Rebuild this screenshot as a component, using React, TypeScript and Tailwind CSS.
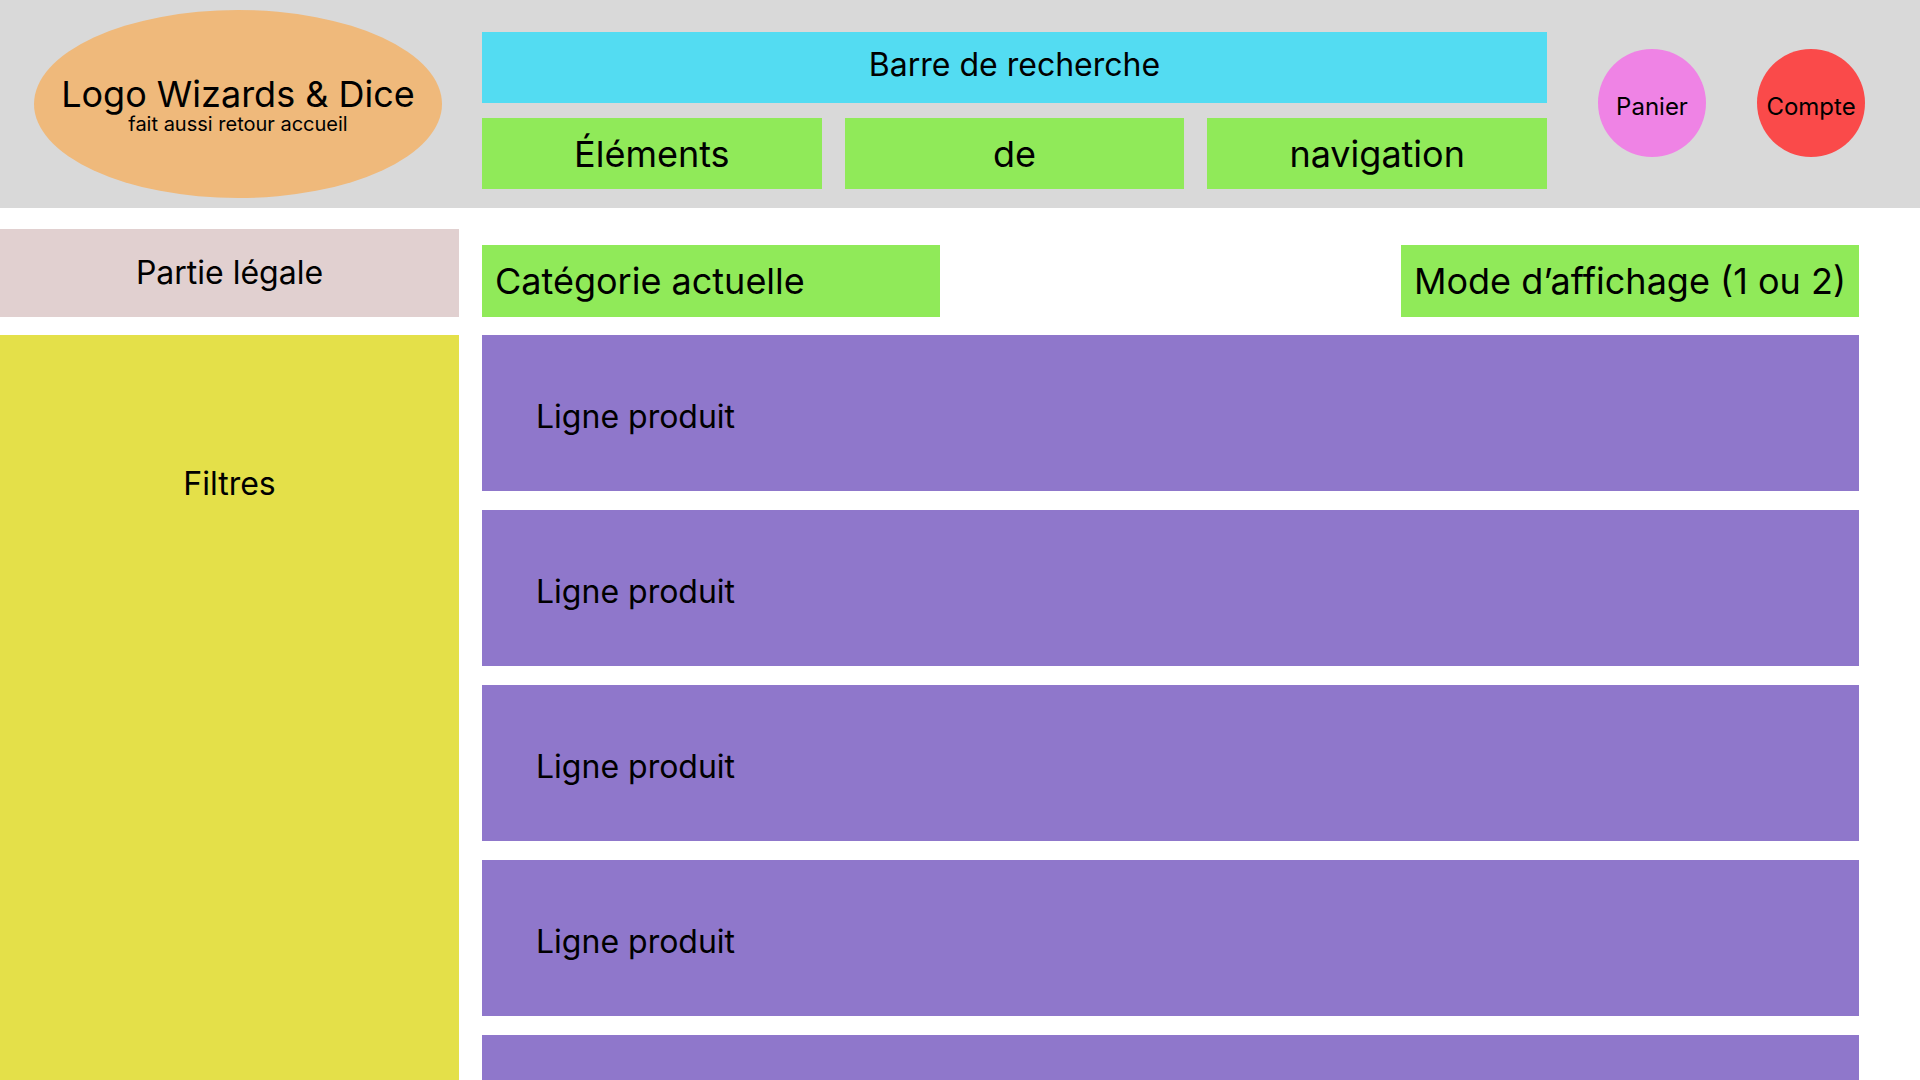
import React from 'react'

const navItems = ['Éléments', 'de', 'navigation']
const productRows = [1, 2, 3, 4, 5, 6]

function Header() {
  return (
    <header className="flex h-[208px] w-full items-start bg-[#d9d9d9]">
      <div className="ml-[34px] mt-[10px] flex h-[188px] w-[408px] flex-col items-center justify-center rounded-[50%] bg-[#efb97b] pt-[2px]">
        <span className="text-[36px] leading-[38px]">Logo Wizards &amp; Dice</span>
        <span className="text-[20px] leading-[22px]">fait aussi retour accueil</span>
      </div>

      <div className="ml-[40px] mt-[32px] flex w-[1065px] flex-col gap-[15px]">
        <div className="flex h-[71px] items-center justify-center bg-[#53dcf2] pb-[5px] text-[32px]">
          Barre de recherche
        </div>
        <div className="flex gap-[23px]">
          {navItems.map((item) => (
            <div key={item} className="flex h-[71px] flex-1 items-center justify-center bg-[#90ea59] text-[36px]">
              {item}
            </div>
          ))}
        </div>
      </div>

      <div className="ml-[51px] mt-[49px] flex gap-[51px]">
        <div className="flex h-[108px] w-[108px] items-center justify-center rounded-full bg-[#ef83e5] pt-[8px] text-[24px]">
          Panier
        </div>
        <div className="flex h-[108px] w-[108px] items-center justify-center rounded-full bg-[#fa4a4a] pt-[8px] text-[24px]">
          Compte
        </div>
      </div>
    </header>
  )
}

export default function App() {
  return (
    <div className="w-full bg-white text-black" style={{ fontFamily: 'Inter, "Noto Sans", sans-serif' }}>
      <Header />

      <div className="flex gap-[23px]">
        <aside className="flex w-[459px] flex-col">
          <div className="mt-[21px] flex h-[88px] items-center justify-center bg-[#e1d0d0] text-[32px]">
            Partie légale
          </div>
          <div className="mt-[18px] flex h-[1200px] justify-center bg-[#e4e049] pt-[125px] text-[32px]">
            Filtres
          </div>
        </aside>

        <main className="flex w-[1377px] flex-col">
          <div className="mt-[37px] flex justify-between">
            <div className="flex h-[72px] w-[458px] items-center bg-[#90ea59] pl-[13px] text-[36px]">
              Catégorie actuelle
            </div>
            <div className="flex h-[72px] w-[458px] items-center justify-center bg-[#90ea59] text-[36px]">
              Mode d’affichage (1 ou 2)
            </div>
          </div>

          <div className="mt-[18px] flex flex-col gap-[19px]">
            {productRows.map((row) => (
              <div key={row} className="flex h-[156px] items-center bg-[#8f77cb] pl-[54px] pt-[8px] text-[32px]">
                Ligne produit
              </div>
            ))}
          </div>
        </main>
      </div>
    </div>
  )
}
